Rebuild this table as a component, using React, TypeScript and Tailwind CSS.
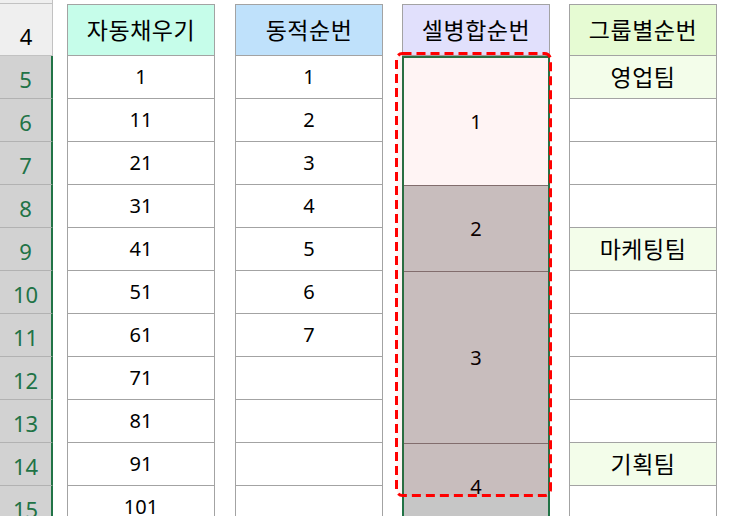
import React from 'react'

const rows = [5, 6, 7, 8, 9, 10, 11, 12, 13, 14, 15]

const autoFill = ['1', '11', '21', '31', '41', '51', '61', '71', '81', '91', '101']
const dynamicSeq = ['1', '2', '3', '4', '5', '6', '7', '', '', '', '']
const groups: Record<number, string> = { 5: '영업팀', 9: '마케팅팀', 14: '기획팀' }

type Cell = { text: string; tint?: boolean }

const DataColumn: React.FC<{ title: string; headerClass: string; cells: Cell[] }> = ({
  title,
  headerClass,
  cells,
}) => (
  <div className="flex w-[148px] shrink-0 flex-col">
    <div className="h-[4px] shrink-0" />
    <div
      className={`flex h-[52px] shrink-0 items-center justify-center border border-[#a3a3a3] text-[23px] tracking-[0.5px] ${headerClass}`}
    >
      {title}
    </div>
    {cells.map((c, i) => (
      <div
        key={i}
        className={`flex h-[43px] shrink-0 items-center justify-center border-x border-b border-[#a3a3a3] ${
          c.tint ? 'bg-[#f3fdea] text-[23px] tracking-[0.5px]' : 'bg-white text-[20px]'
        }`}
      >
        {c.text}
      </div>
    ))}
  </div>
)

const App: React.FC = () => {
  return (
    <div className="relative flex h-[516px] w-[731px] overflow-hidden bg-white font-['Noto_Sans','Noto_Sans_CJK_KR',sans-serif] text-black">
      {/* row headers */}
      <div className="flex w-[53px] shrink-0 flex-col">
        <div className="h-[4px] shrink-0 border-r border-b border-[#c2c2c2] bg-[#efefef]" />
        <div className="flex h-[52px] shrink-0 items-end justify-center border-r border-b border-[#c2c2c2] bg-[#efefef] pb-[8px] text-[22px] leading-none">
          4
        </div>
        {rows.map((r) => (
          <div
            key={r}
            className="flex h-[43px] shrink-0 items-center justify-center border-b border-b-[#b2b2b2] border-r-2 border-r-[#217346] bg-[#d2d2d2] pt-[3px] text-[22px] leading-none text-[#217346]"
          >
            {r}
          </div>
        ))}
      </div>

      <div className="w-[14px] shrink-0" />

      <DataColumn title="자동채우기" headerClass="bg-[#c6fdea]" cells={autoFill.map((t) => ({ text: t }))} />

      <div className="w-[20px] shrink-0" />

      <DataColumn title="동적순번" headerClass="bg-[#bfe1fb]" cells={dynamicSeq.map((t) => ({ text: t }))} />

      <div className="w-[19px] shrink-0" />

      {/* merged-cell column, selected */}
      <div className="flex w-[148px] shrink-0 flex-col">
        <div className="h-[4px] shrink-0" />
        <div className="flex h-[52px] shrink-0 items-center justify-center border border-[#a3a3a3] bg-[#e1e0fc] text-[23px] tracking-[0.5px]">
          셀병합순번
        </div>
        <div className="flex shrink-0 flex-col border-x-2 border-t-2 border-[#217346] text-[20px]">
          <div className="flex h-[127px] shrink-0 items-center justify-center bg-white">1</div>
          <div className="flex h-[86px] shrink-0 items-center justify-center border-t border-[#7d7272] bg-[#c6c6c6]">
            2
          </div>
          <div className="flex h-[172px] shrink-0 items-center justify-center border-t border-[#7d7272] bg-[#c6c6c6]">
            3
          </div>
          <div className="flex h-[86px] shrink-0 items-center justify-center border-t border-[#7d7272] bg-[#c6c6c6]">
            4
          </div>
        </div>
      </div>

      <div className="w-[19px] shrink-0" />

      <DataColumn
        title="그룹별순번"
        headerClass="bg-[#e6fbd3]"
        cells={rows.map((r) => ({ text: groups[r] ?? '', tint: !!groups[r] }))}
      />

      {/* dashed annotation over the merged column */}
      <svg
        className="pointer-events-none absolute left-[395px] top-[52px]"
        width="157"
        height="445"
        viewBox="0 0 157 445"
      >
        <rect
          x="1.5"
          y="1.5"
          width="154"
          height="442"
          rx="6"
          fill="rgba(255,0,0,0.045)"
          stroke="#ff0000"
          strokeWidth="3"
          strokeDasharray="9 5"
        />
      </svg>
    </div>
  )
}

export default App
